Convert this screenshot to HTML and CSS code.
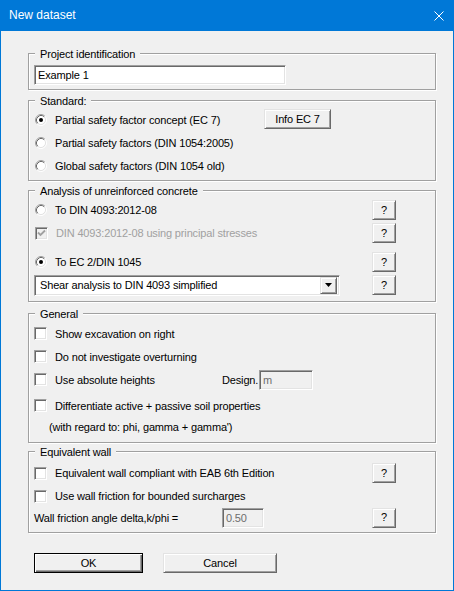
FILE: index.html
```html
<!DOCTYPE html>
<html>
<head>
<meta charset="utf-8">
<title>New dataset</title>
<link rel="stylesheet" href="styles.css">
</head>
<body>
<div class="window">
  <div class="titlebar">
    <span class="title">New dataset</span>
    <svg class="close" width="10" height="10" viewBox="0 0 10 10"><path d="M0.5 0.5L9.5 9.5M9.5 0.5L0.5 9.5" stroke="#fff" stroke-width="1" fill="none"/></svg>
  </div>
  <div class="client">
    <div class="group g1">
      <span class="legend">Project identification</span>
      <div class="edit name">Example 1</div>
    </div>

    <div class="group g2">
      <span class="legend">Standard:</span>
      <div class="row h22">
        <svg class="radio" width="12" height="12" viewBox="0 0 12 12"><circle cx="6" cy="6" r="4.5" fill="#fff"/><path d="M2.11 9.89A5.5 5.5 0 0 1 9.89 2.11" stroke="#a0a0a0" fill="none"/><path d="M9.89 2.11A5.5 5.5 0 0 1 2.11 9.89" stroke="#fff" fill="none"/><path d="M2.82 9.18A4.5 4.5 0 0 1 9.18 2.82" stroke="#696969" fill="none"/><path d="M9.18 2.82A4.5 4.5 0 0 1 2.82 9.18" stroke="#e3e3e3" fill="none"/><circle cx="6" cy="6" r="2" fill="#000"/></svg>
        <span class="lbl w209">Partial safety factor concept (EC 7)</span>
        <button class="btn info">Info EC 7</button>
      </div>
      <div class="row h23">
        <svg class="radio" width="12" height="12" viewBox="0 0 12 12"><circle cx="6" cy="6" r="4.5" fill="#fff"/><path d="M2.11 9.89A5.5 5.5 0 0 1 9.89 2.11" stroke="#a0a0a0" fill="none"/><path d="M9.89 2.11A5.5 5.5 0 0 1 2.11 9.89" stroke="#fff" fill="none"/><path d="M2.82 9.18A4.5 4.5 0 0 1 9.18 2.82" stroke="#696969" fill="none"/><path d="M9.18 2.82A4.5 4.5 0 0 1 2.82 9.18" stroke="#e3e3e3" fill="none"/></svg>
        <span class="lbl">Partial safety factors (DIN 1054:2005)</span>
      </div>
      <div class="row h23">
        <svg class="radio" width="12" height="12" viewBox="0 0 12 12"><circle cx="6" cy="6" r="4.5" fill="#fff"/><path d="M2.11 9.89A5.5 5.5 0 0 1 9.89 2.11" stroke="#a0a0a0" fill="none"/><path d="M9.89 2.11A5.5 5.5 0 0 1 2.11 9.89" stroke="#fff" fill="none"/><path d="M2.82 9.18A4.5 4.5 0 0 1 9.18 2.82" stroke="#696969" fill="none"/><path d="M9.18 2.82A4.5 4.5 0 0 1 2.82 9.18" stroke="#e3e3e3" fill="none"/></svg>
        <span class="lbl">Global safety factors (DIN 1054 old)</span>
      </div>
    </div>

    <div class="group g3">
      <span class="legend">Analysis of unreinforced concrete</span>
      <div class="row h22 qrow">
        <svg class="radio" width="12" height="12" viewBox="0 0 12 12"><circle cx="6" cy="6" r="4.5" fill="#fff"/><path d="M2.11 9.89A5.5 5.5 0 0 1 9.89 2.11" stroke="#a0a0a0" fill="none"/><path d="M9.89 2.11A5.5 5.5 0 0 1 2.11 9.89" stroke="#fff" fill="none"/><path d="M2.82 9.18A4.5 4.5 0 0 1 9.18 2.82" stroke="#696969" fill="none"/><path d="M9.18 2.82A4.5 4.5 0 0 1 2.82 9.18" stroke="#e3e3e3" fill="none"/></svg>
        <span class="lbl">To DIN 4093:2012-08</span>
        <button class="btn q">?</button>
      </div>
      <div class="row h22 qrow gap1">
        <span class="check disabled"><svg width="9" height="9" viewBox="0 0 9 9"><path d="M1 3.5L3.5 6L8 1.5" stroke="#a0a0a0" stroke-width="1.8" fill="none"/></svg></span>
        <span class="lbl dis">DIN 4093:2012-08 using principal stresses</span>
        <button class="btn q">?</button>
      </div>
      <div class="row h22 qrow gap7">
        <svg class="radio" width="12" height="12" viewBox="0 0 12 12"><circle cx="6" cy="6" r="4.5" fill="#fff"/><path d="M2.11 9.89A5.5 5.5 0 0 1 9.89 2.11" stroke="#a0a0a0" fill="none"/><path d="M9.89 2.11A5.5 5.5 0 0 1 2.11 9.89" stroke="#fff" fill="none"/><path d="M2.82 9.18A4.5 4.5 0 0 1 9.18 2.82" stroke="#696969" fill="none"/><path d="M9.18 2.82A4.5 4.5 0 0 1 2.82 9.18" stroke="#e3e3e3" fill="none"/><circle cx="6" cy="6" r="2" fill="#000"/></svg>
        <span class="lbl">To EC 2/DIN 1045</span>
        <button class="btn q">?</button>
      </div>
      <div class="row h22 qrow gap1">
        <div class="select">
          <span class="seltext">Shear analysis to DIN 4093 simplified</span>
          <span class="dropbtn"><svg width="7" height="4" viewBox="0 0 7 4"><path d="M0 0H7L3.5 4Z" fill="#000"/></svg></span>
        </div>
        <button class="btn q">?</button>
      </div>
    </div>

    <div class="group g4">
      <span class="legend">General</span>
      <div class="row h23">
        <span class="check"></span>
        <span class="lbl">Show excavation on right</span>
      </div>
      <div class="row h23">
        <span class="check"></span>
        <span class="lbl">Do not investigate overturning</span>
      </div>
      <div class="row h23">
        <span class="check"></span>
        <span class="lbl w167">Use absolute heights</span>
        <span class="design">Design.</span>
        <div class="edit dis design-edit">m</div>
      </div>
      <div class="row h23 gap3">
        <span class="check"></span>
        <span class="lbl">Differentiate active + passive soil properties</span>
      </div>
      <div class="row h19 note">(with regard to: phi, gamma + gamma')</div>
    </div>

    <div class="group g5">
      <span class="legend">Equivalent wall</span>
      <div class="row h22 qrow">
        <span class="check"></span>
        <span class="lbl">Equivalent wall compliant with EAB 6th Edition</span>
        <button class="btn q">?</button>
      </div>
      <div class="row h22 gap1">
        <span class="check"></span>
        <span class="lbl">Use wall friction for bounded surcharges</span>
      </div>
      <div class="row h21 qrow">
        <span class="plain w188">Wall friction angle delta,k/phi =</span>
        <div class="edit dis delta-edit">0.50</div>
        <button class="btn q">?</button>
      </div>
    </div>

    <div class="actions">
      <button class="btn ok">OK</button>
      <button class="btn cancel">Cancel</button>
    </div>
  </div>
</div>
</body>
</html>
```

FILE: styles.css
```css
* { box-sizing: border-box; }
html, body { margin: 0; padding: 0; }
body {
  width: 454px;
  height: 591px;
  overflow: hidden;
  background: #0078d7;
  font-family: "Liberation Sans", Arial, sans-serif;
  font-size: 11px;
  line-height: 13px;
  color: #000;
  letter-spacing: -0.15px;
}
.window {
  width: 454px;
  height: 591px;
  background: #0078d7;
  padding: 0 1px 1px 1px;
  display: flex;
  flex-direction: column;
}
.titlebar {
  height: 31px;
  flex: none;
  display: flex;
  align-items: center;
  padding-left: 8px;
  color: #fff;
  font-size: 12px;
  letter-spacing: 0;
}
.close { margin-left: auto; margin-right: 9px; }
.client {
  flex: 1;
  background: #f0f0f0;
  padding-top: 22px;
}
.group {
  position: relative;
  width: 408px;
  margin-left: 27px;
  border: 1px solid #a0a0a0;
  box-shadow: 1px 1px 0 #fff, inset 1px 1px 0 #fff;
  padding-left: 5px;
}
.legend {
  position: absolute;
  top: -6px;
  left: 6px;
  padding: 0 5px;
  background: #f0f0f0;
  line-height: 13px;
  white-space: nowrap;
}
.g1 { padding-top: 11px; padding-bottom: 4px; }
.g2 { margin-top: 10px; padding-top: 8px; padding-bottom: 3px; }
.g3 { margin-top: 9px; padding-top: 8px; padding-bottom: 5px; }
.g4 { margin-top: 11px; padding-top: 8px; padding-bottom: 6px; }
.g5 { margin-top: 8px; padding-top: 10px; padding-bottom: 4px; }

.row { display: flex; align-items: center; white-space: nowrap; }
.h19 { height: 19px; }
.h21 { height: 21px; }
.h22 { height: 22px; }
.h23 { height: 23px; }
.gap1 { margin-top: 1px; }
.gap3 { margin-top: 3px; }
.gap7 { margin-top: 7px; }
.qrow { padding-right: 39px; }
.qrow .q { margin-left: auto; }

.radio { flex: none; margin-left: 1px; display: block; }
.check {
  flex: none;
  width: 13px;
  height: 13px;
  background: #fff;
  border: 1px solid;
  border-color: #a0a0a0 #fff #fff #a0a0a0;
  box-shadow: inset 1px 1px 0 #696969, inset -1px -1px 0 #e3e3e3;
  display: flex;
  align-items: center;
  justify-content: center;
}
.check.disabled { background: #f0f0f0; margin-left: 1px; }
.lbl { margin-left: 8px; padding-top: 1px; }
.lbl.dis { color: #a0a0a0; }
.w209 { width: 209px; flex: none; }
.w167 { width: 167px; flex: none; }
.w188 { width: 188px; flex: none; padding-top: 1px; }
.note { padding-left: 15px; padding-top: 1px; }
.design { width: 37px; flex: none; padding-top: 1px; }

.edit {
  height: 20px;
  background: #fff;
  border: 1px solid;
  border-color: #a0a0a0 #fff #fff #a0a0a0;
  box-shadow: inset 1px 1px 0 #696969, inset -1px -1px 0 #e3e3e3;
  padding: 3px 0 0 3px;
  white-space: nowrap;
}
.edit.name { width: 252px; }
.edit.dis { background: #f0f0f0; color: #6d6d6d; }
.design-edit { width: 54px; }
.delta-edit { width: 42px; }

.select {
  width: 306px;
  height: 21px;
  background: #fff;
  border: 1px solid;
  border-color: #a0a0a0 #fff #fff #a0a0a0;
  box-shadow: inset 1px 1px 0 #696969, inset -1px -1px 0 #e3e3e3;
  display: flex;
  align-items: center;
  padding: 1px 2px 1px 2px;
}
.seltext { flex: 1; padding-left: 3px; padding-top: 1px; }
.dropbtn {
  width: 17px;
  height: 17px;
  background: #f0f0f0;
  border: 1px solid;
  border-color: #e3e3e3 #696969 #696969 #e3e3e3;
  box-shadow: inset 1px 1px 0 #fff, inset -1px -1px 0 #a0a0a0;
  display: flex;
  align-items: center;
  justify-content: center;
}
.dropbtn svg { display: block; }

.btn {
  font-family: inherit;
  font-size: 11px;
  letter-spacing: -0.15px;
  color: #000;
  background: #f0f0f0;
  border: 1px solid;
  border-color: #e3e3e3 #696969 #696969 #e3e3e3;
  box-shadow: inset 1px 1px 0 #fff, inset -1px -1px 0 #a0a0a0;
  padding: 0;
  margin: 0;
  height: 20px;
  line-height: 13px;
  flex: none;
}
.info { width: 67px; align-self: flex-start; }
.q { width: 24px; }

.actions {
  display: flex;
  margin-top: 20px;
  padding-left: 33px;
}
.ok {
  width: 109px;
  border: 1px solid #000;
  box-shadow: inset 1px 1px 0 #fff, inset -1px -1px 0 #696969, inset -2px -2px 0 #a0a0a0;
}
.cancel { width: 114px; margin-left: 20px; }
```
